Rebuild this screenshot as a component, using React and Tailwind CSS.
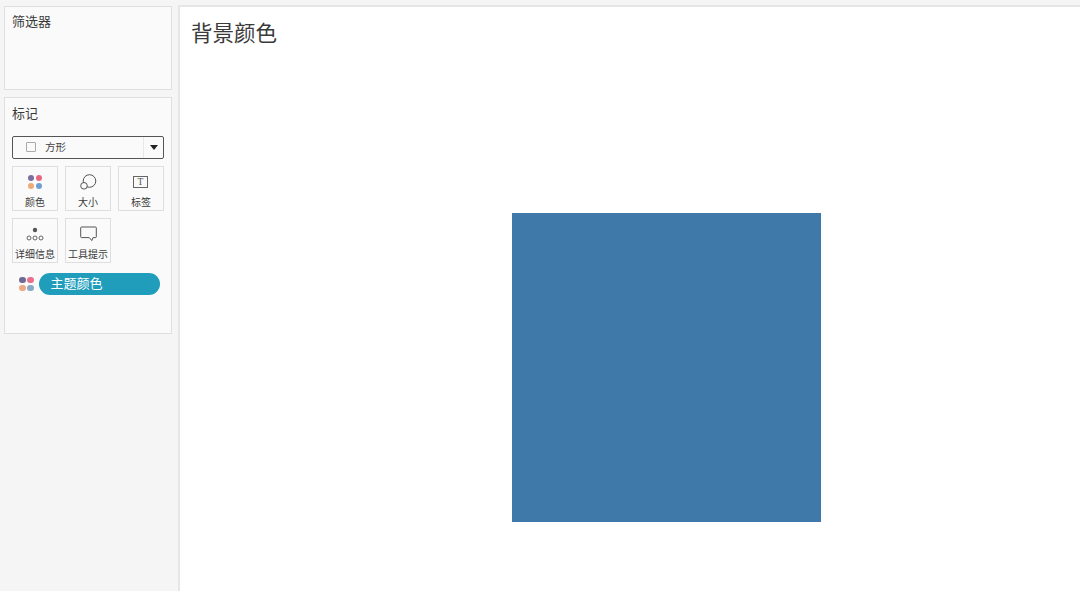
const font = { fontFamily: '"Noto Sans CJK SC", "Liberation Sans", sans-serif' };

function Dots({ size = 6.5, gap = 1.5, colors = ['#7b6f9e', '#e8667f', '#f0a878', '#6f9fd0'] }) {
  return (
    <div className="grid grid-cols-2" style={{ gap, width: size * 2 + gap }}>
      {colors.map((c) => (
        <span key={c} className="block rounded-full" style={{ width: size, height: size, background: c }} />
      ))}
    </div>
  );
}

function Tile({ label, children }) {
  return (
    <div className="w-[46px] h-[45px] border border-[#dedede] bg-[#fafafa] flex flex-col items-center">
      <div className="h-[28px] w-full flex items-center justify-center pt-[2px]">{children}</div>
      <span className="text-[10px] leading-[13px] text-[#3a3a3a] whitespace-nowrap">{label}</span>
    </div>
  );
}

export default function App() {
  return (
    <div style={font} className="w-[1080px] h-[591px] overflow-hidden bg-[#f5f5f5] flex pt-[5px]">
      <aside className="w-[178px] shrink-0 pl-[4px] pt-[1px] flex flex-col gap-[7px]">
        <section className="w-[168px] h-[84px] border border-[#dfdfdf] bg-[#fafafa] pl-[7px] pt-[5px]">
          <h2 className="text-[13px] leading-[18px] font-normal text-[#3a3a3a]">筛选器</h2>
        </section>
        <section className="w-[168px] h-[237px] border border-[#dfdfdf] bg-[#fafafa] pl-[7px] pt-[6px]">
          <h2 className="text-[13px] leading-[18px] font-normal text-[#3a3a3a]">标记</h2>
          <div className="mt-[14px] w-[152px] h-[23px] border border-[#555] rounded-[2px] bg-[#fafafa] flex items-center">
            <span className="ml-[13px] w-[10px] h-[10px] border border-[#aaa] rounded-[1px] -translate-y-[1px]" />
            <span className="ml-[9px] text-[10.5px] leading-[14px] text-[#444] -translate-y-[1px]">方形</span>
            <span className="ml-auto w-[20px] h-full border-l border-[#e8e8e8] flex items-center justify-center">
              <span className="w-0 h-0 border-x-[4.5px] border-x-transparent border-t-[5px] border-t-[#222]" />
            </span>
          </div>
          <div className="mt-[7px] grid grid-cols-[46px_46px_46px] gap-[7px]">
            <Tile label="颜色"><Dots /></Tile>
            <Tile label="大小">
              <svg width="18" height="16" viewBox="0 0 18 16" fill="none" stroke="#555" strokeWidth="1">
                <circle cx="10.5" cy="7" r="6.3" />
                <circle cx="5" cy="11.8" r="3.3" fill="#fafafa" />
              </svg>
            </Tile>
            <Tile label="标签">
              <svg width="15" height="12" viewBox="0 0 15 12" fill="none" className="-translate-x-[1px]">
                <rect x="0.5" y="0.5" width="14" height="11" stroke="#666" />
                <text x="7.5" y="9.3" textAnchor="middle" fontSize="9.5" fill="#555" fontFamily="Liberation Serif">T</text>
              </svg>
            </Tile>
            <Tile label="详细信息">
              <svg width="18" height="14" viewBox="0 0 18 14" fill="none" stroke="#555" strokeWidth="0.9">
                <circle cx="9" cy="3" r="2.2" fill="#555" stroke="none" />
                <circle cx="3" cy="11" r="2" />
                <circle cx="9" cy="11" r="2" />
                <circle cx="15" cy="11" r="2" />
              </svg>
            </Tile>
            <Tile label="工具提示">
              <svg width="17" height="16" viewBox="0 0 17 16" fill="none" stroke="#555" strokeWidth="1">
                <path d="M1.5 1h14a.8.8 0 0 1 .8.8v9a.8.8 0 0 1-.8.8H13l-1.2 3-2.6-3H1.5a.8.8 0 0 1-.8-.8v-9a.8.8 0 0 1 .8-.8z" />
              </svg>
            </Tile>
          </div>
          <div className="mt-[10px] ml-[7px] flex items-center gap-[5px]">
            <Dots size={6.5} gap={1.5} colors={['#6f6a94', '#e8708c', '#eda884', '#8aa9c9']} />
            <div className="w-[121px] h-[22px] rounded-full bg-[#209dbb] text-white text-[13px] leading-[20px] pl-[12px]">主题颜色</div>
          </div>
        </section>
      </aside>
      <main className="flex-1 border-l-2 border-t-2 border-[#e6e6e6] bg-white flex flex-col">
        <h1 className="ml-[11px] mt-[10px] text-[21.5px] leading-[30px] font-normal text-[#3a3a3a]">背景颜色</h1>
        <div className="ml-[332px] mt-[166px] w-[309px] h-[309px] bg-[#3f79a9]" />
      </main>
    </div>
  );
}
